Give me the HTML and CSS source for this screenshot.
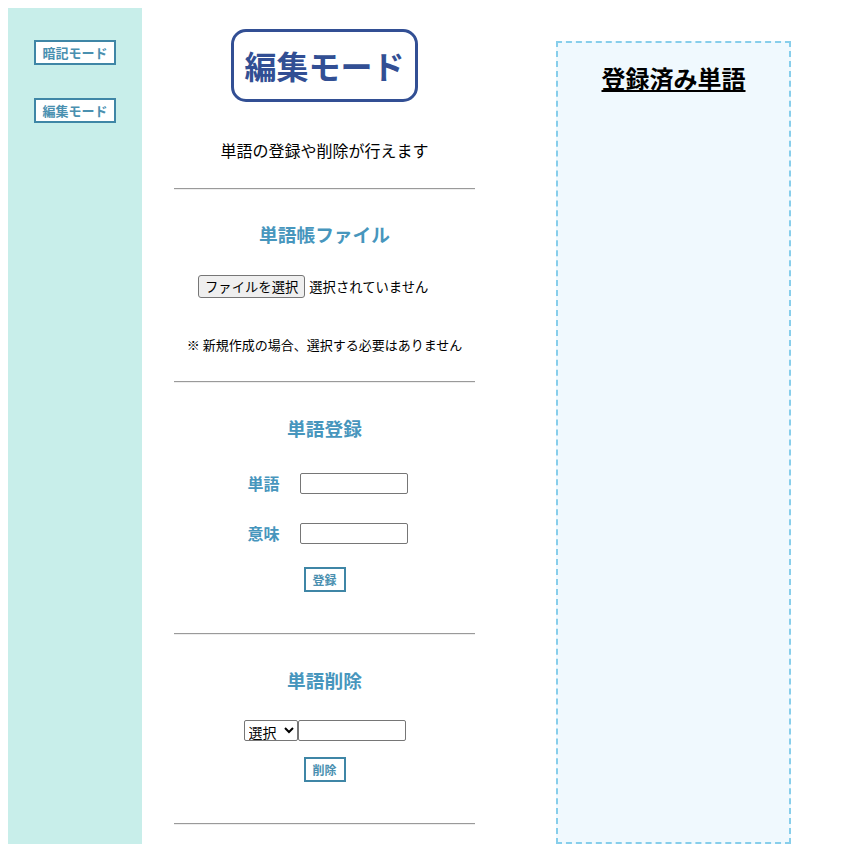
FILE: index.html
```html
<!DOCTYPE html>
<html lang="ja">
<head>
    <meta charset="UTF-8">
    <meta name="viewport" content="width=device-width, initial-scale=1.0">
    <title>編集モード</title>
    <link rel="stylesheet" href="styles.css">
</head>
<body>
    <nav class="sidebar">
        <button class="nav-btn">暗記モード</button>
        <button class="nav-btn">編集モード</button>
    </nav>

    <main class="main">
        <h1 class="title">編集モード</h1>
        <p class="lead">単語の登録や削除が行えます</p>
        <hr>

        <section class="block file-block">
            <h3 class="section-title">単語帳ファイル</h3>
            <div class="file-row">
                <label class="file-btn">ファイルを選択<input type="file" class="file-input"></label>
                <span class="file-name">選択されていません</span>
            </div>
            <p class="note">※ 新規作成の場合、選択する必要はありません</p>
        </section>
        <hr>

        <section class="block with-btn">
            <h3 class="section-title">単語登録</h3>
            <div class="form-row">
                <label class="form-label">単語</label>
                <input type="text" class="text-input">
            </div>
            <div class="form-row">
                <label class="form-label">意味</label>
                <input type="text" class="text-input">
            </div>
            <button class="small-btn">登録</button>
        </section>
        <hr>

        <section class="block with-btn">
            <h3 class="section-title">単語削除</h3>
            <div class="delete-row"><select class="select"><option>選択</option></select><input type="text" class="text-input"></div>
            <button class="small-btn">削除</button>
        </section>
        <hr>
    </main>

    <aside class="panel">
        <h2 class="panel-title">登録済み単語</h2>
    </aside>
</body>
</html>
```

FILE: styles.css
```css
* {
    box-sizing: border-box;
}
body {
    margin: 8px 0 0 8px;
    font-family: "Noto Sans CJK JP", "Noto Sans", sans-serif;
    color: #000;
    display: flex;
    align-items: flex-start;
    overflow: hidden;
}

/* サイドバー */
.sidebar {
    width: 134px;
    height: calc(100vh - 8px);
    background: #c8eeea;
    display: flex;
    flex-direction: column;
    align-items: center;
    padding-top: 32px;
    gap: 33px;
}
.nav-btn {
    width: 82px;
    height: 25px;
    padding: 0;
    background: white;
    border: 2px solid #3f86a6;
    color: #4a90b0;
    font-family: inherit;
    font-size: 13px;
    font-weight: bold;
    line-height: 20px;
}

/* メイン */
.main {
    width: 301px;
    margin-left: 32px;
    text-align: center;
}
.title {
    display: inline-block;
    margin: 21px 0 0;
    padding: 9px 10px 10px;
    border: 3px solid #324f94;
    border-radius: 15px;
    color: #324f94;
    font-size: 32px;
    font-weight: bold;
    line-height: 48px;
}
.lead {
    margin: 36px 0 0;
    font-size: 16px;
    line-height: 24px;
}
hr {
    margin: 26px 0 0;
    border: none;
    border-top: 1px solid #9a9a9a;
    border-bottom: 1px solid #eee;
}
.block {
    padding-top: 31px;
}
.file-block {
    padding-top: 30px;
    padding-bottom: 1px;
}
.with-btn {
    padding-bottom: 15px;
}
.section-title {
    margin: 0;
    color: #4796bd;
    font-size: 18.72px;
    font-weight: bold;
    line-height: 28px;
}
.file-row {
    width: 253px;
    margin: 27px auto 0;
    display: flex;
    align-items: center;
    gap: 4px;
    font-size: 13.33px;
}
.file-btn {
    display: inline-block;
    height: 23px;
    padding: 0 6px;
    background: #efefef;
    border: 1px solid #767676;
    border-radius: 3px;
    line-height: 21px;
}
.file-input {
    display: none;
}
.file-name {
    line-height: 21px;
}
.note {
    margin: 38px 0 0;
    font-size: 13px;
    line-height: 18px;
}
.form-row {
    display: flex;
    justify-content: center;
    align-items: center;
    gap: 20px;
    margin-top: 31px;
    padding-left: 6px;
    height: 21px;
}
.form-row + .form-row {
    margin-top: 29px;
}
.form-label {
    width: 32px;
    color: #4796bd;
    font-size: 16px;
    font-weight: bold;
    line-height: 21px;
}
.text-input {
    width: 108px;
    height: 21px;
    margin: 0;
    border: 1px solid #767676;
    border-radius: 2px;
    padding: 0 2px;
}
.small-btn {
    display: block;
    margin: 23px auto 0;
    width: 42px;
    height: 25px;
    padding: 0;
    background: white;
    border: 2px solid #3f86a6;
    color: #4a90b0;
    font-family: inherit;
    font-size: 12px;
    font-weight: bold;
    line-height: 20px;
}
.delete-row {
    display: flex;
    justify-content: center;
    margin-top: 26px;
}
.select {
    width: 54px;
    height: 21px;
    margin: 0;
    font-family: inherit;
    font-size: 14px;
    border: 1px solid #767676;
    border-radius: 2px;
    background: white;
    padding: 0;
}
.delete-row + .small-btn {
    margin-top: 16px;
}

/* 登録済み単語 */
.panel {
    width: 235px;
    height: calc(100vh - 41px);
    margin: 33px 0 0 81px;
    background: #f0f9fe;
    border: 2px dashed #87ceeb;
    text-align: center;
}
.panel-title {
    margin: 19px 0 0;
    font-size: 24px;
    font-weight: bold;
    line-height: 32px;
    text-decoration: underline;
}
```
